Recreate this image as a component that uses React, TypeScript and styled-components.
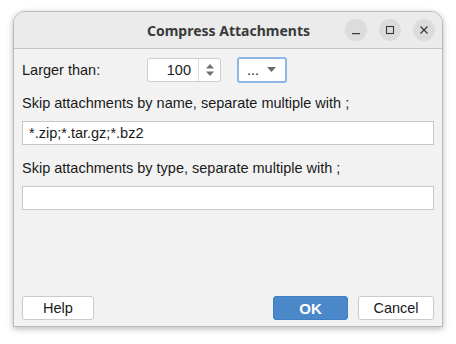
import React from "react"
import styled, { createGlobalStyle } from "styled-components"

const GlobalStyle = createGlobalStyle`
    html, body {
        margin: 0;
        padding: 0;
        background: #ffffff;
    }
    * {
        box-sizing: border-box;
    }
`

const Page = styled.div`
    width: 456px;
    height: 344px;
    padding: 11px 13px 0 13px;
    font-family: "Liberation Sans", Arial, sans-serif;
    font-size: 14.5px;
    color: #1a1a1a;
`

const Window = styled.div`
    width: 430px;
    height: 316px;
    display: flex;
    flex-direction: column;
    background: #f2f2f2;
    border: 1px solid #b9b9b9;
    border-radius: 12px 12px 0 0;
    box-shadow: 0 2px 6px rgba(0, 0, 0, 0.28);
    overflow: hidden;
`

const TitleBar = styled.div`
    height: 37px;
    flex-shrink: 0;
    display: flex;
    align-items: center;
    justify-content: center;
    position: relative;
    background: #ebebeb;
    border-bottom: 1px solid #c4c4c4;
`

const Title = styled.div`
    font-family: "Noto Sans", sans-serif;
    font-weight: 700;
    font-size: 14px;
    color: #3a3a3a;
    margin-left: 1px;
`

const Controls = styled.div`
    position: absolute;
    right: 7px;
    top: 7px;
    display: flex;
    gap: 12px;
`

const CircleButton = styled.div`
    width: 22px;
    height: 22px;
    border-radius: 50%;
    background: #dcdcdc;
    display: flex;
    align-items: center;
    justify-content: center;
    color: #3a3a3a;
`

const Body = styled.div`
    flex: 1;
    display: flex;
    flex-direction: column;
    padding: 7px 8px 6px 7px;
`

const TopRow = styled.div`
    display: flex;
    align-items: center;
    height: 28px;
`

const Label = styled.div<{ $width?: number }>`
    width: ${({ $width }) => ($width ? `${$width}px` : "auto")};
    padding-left: 1px;
    line-height: 16px;
`

const SpinBox = styled.div`
    width: 74px;
    height: 24px;
    display: flex;
    background: #ffffff;
    border: 1px solid #cdcdcd;
    border-radius: 3px;
`

const SpinValue = styled.div`
    flex: 1;
    text-align: right;
    padding-right: 7px;
    line-height: 22px;
`

const SpinArrows = styled.div`
    width: 22px;
    border-left: 1px solid #dcdcdc;
    display: flex;
    align-items: center;
    justify-content: center;
`

const Combo = styled.div`
    margin-left: 16px;
    width: 50px;
    height: 26px;
    display: flex;
    align-items: center;
    justify-content: space-between;
    padding: 0 9px 0 8px;
    background: #ffffff;
    border: 2px solid #8fb6e6;
    border-radius: 3px;
    line-height: 16px;
`

const FieldLabel = styled.div<{ $top: number }>`
    margin-top: ${({ $top }) => $top}px;
    padding-left: 1px;
    line-height: 16px;
`

const TextField = styled.div`
    margin-top: 10px;
    margin-left: 1px;
    height: 24px;
    background: #ffffff;
    border: 1px solid #c8c8c8;
    padding-left: 6px;
    line-height: 22px;
`

const Spacer = styled.div`
    flex: 1;
`

const ButtonRow = styled.div`
    display: flex;
    align-items: center;
    gap: 10px;
`

const Button = styled.div<{ $width: number; $primary?: boolean }>`
    width: ${({ $width }) => $width}px;
    height: 24px;
    display: flex;
    align-items: center;
    justify-content: center;
    border-radius: 3px;
    border: 1px solid ${({ $primary }) => ($primary ? "#3f7fc1" : "#cacaca")};
    background: ${({ $primary }) => ($primary ? "#4a88c9" : "#ffffff")};
    color: ${({ $primary }) => ($primary ? "#ffffff" : "#1a1a1a")};
    font-weight: ${({ $primary }) => ($primary ? 700 : 400)};
    font-size: ${({ $primary }) => ($primary ? "15px" : "14.5px")};
`

export default function App() {
    return (
        <>
            <GlobalStyle />
            <Page>
                <Window>
                    <TitleBar>
                        <Title>Compress Attachments</Title>
                        <Controls>
                            <CircleButton>
                                <svg width="10" height="10" viewBox="0 0 10 10">
                                    <rect x="1" y="8" width="8" height="1.2" fill="currentColor" />
                                </svg>
                            </CircleButton>
                            <CircleButton>
                                <svg width="10" height="10" viewBox="0 0 10 10">
                                    <rect x="1.5" y="1.5" width="7" height="7" fill="none" stroke="currentColor" strokeWidth="1.1" />
                                </svg>
                            </CircleButton>
                            <CircleButton>
                                <svg width="10" height="10" viewBox="0 0 10 10">
                                    <path d="M1.5 1.5 L8.5 8.5 M8.5 1.5 L1.5 8.5" stroke="currentColor" strokeWidth="1.2" />
                                </svg>
                            </CircleButton>
                        </Controls>
                    </TitleBar>
                    <Body>
                        <TopRow>
                            <Label $width={126}>Larger than:</Label>
                            <SpinBox>
                                <SpinValue>100</SpinValue>
                                <SpinArrows>
                                    <svg width="10" height="16" viewBox="0 0 10 16">
                                        <path d="M1 6.5 L5 2 L9 6.5 Z" fill="#707070" />
                                        <path d="M1 9.5 L5 14 L9 9.5 Z" fill="#707070" />
                                    </svg>
                                </SpinArrows>
                            </SpinBox>
                            <Combo>
                                <span>...</span>
                                <svg width="9" height="6" viewBox="0 0 9 6">
                                    <path d="M0 0 L9 0 L4.5 5 Z" fill="#6a6a6a" />
                                </svg>
                            </Combo>
                        </TopRow>
                        <FieldLabel $top={11}>Skip attachments by name, separate multiple with ;</FieldLabel>
                        <TextField>*.zip;*.tar.gz;*.bz2</TextField>
                        <FieldLabel $top={15}>Skip attachments by type, separate multiple with ;</FieldLabel>
                        <TextField />
                        <Spacer />
                        <ButtonRow>
                            <Button $width={72} style={{ marginLeft: 1 }}>Help</Button>
                            <Spacer />
                            <Button $width={75} $primary>OK</Button>
                            <Button $width={76}>Cancel</Button>
                        </ButtonRow>
                    </Body>
                </Window>
            </Page>
        </>
    )
}
